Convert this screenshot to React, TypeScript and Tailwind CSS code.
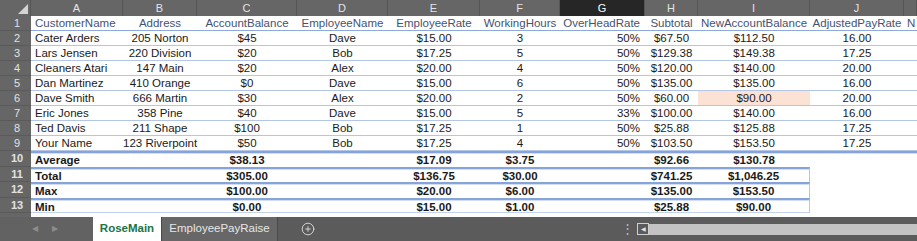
import { CirclePlus } from "lucide-react";

const cols = [
  { key: "A", w: "w-[92px]", align: "text-left pl-[4px]" },
  { key: "B", w: "w-[74px]", align: "text-center" },
  { key: "C", w: "w-[100px]", align: "text-center" },
  { key: "D", w: "w-[91px]", align: "text-center" },
  { key: "E", w: "w-[92px]", align: "text-center" },
  { key: "F", w: "w-[80px]", align: "text-center" },
  { key: "G", w: "w-[85px]", align: "text-right pr-[5px]" },
  { key: "H", w: "w-[53px]", align: "text-center" },
  { key: "I", w: "w-[112px]", align: "text-center" },
  { key: "J", w: "w-[94px]", align: "text-center" },
  { key: "K", w: "flex-1", align: "text-left pl-[3px]" },
];

const headings = [
  "CustomerName", "Address", "AccountBalance", "EmployeeName", "EmployeeRate",
  "WorkingHours", "OverHeadRate", "Subtotal", "NewAccountBalance", "AdjustedPayRate", "N",
];

const rows = [
  ["Cater Arders", "205 Norton", "$45", "Dave", "$15.00", "3", "50%", "$67.50", "$112.50", "16.00"],
  ["Lars Jensen", "220 Division", "$20", "Bob", "$17.25", "5", "50%", "$129.38", "$149.38", "17.25"],
  ["Cleaners Atari", "147 Main", "$20", "Alex", "$20.00", "4", "50%", "$120.00", "$140.00", "20.00"],
  ["Dan Martinez", "410 Orange", "$0", "Dave", "$15.00", "6", "50%", "$135.00", "$135.00", "16.00"],
  ["Dave Smith", "666 Martin", "$30", "Alex", "$20.00", "2", "50%", "$60.00", "$90.00", "20.00"],
  ["Eric Jones", "358 Pine", "$40", "Dave", "$15.00", "5", "33%", "$100.00", "$140.00", "16.00"],
  ["Ted Davis", "211 Shape", "$100", "Bob", "$17.25", "1", "50%", "$25.88", "$125.88", "17.25"],
  ["Your Name", "123 Riverpoint", "$50", "Bob", "$17.25", "4", "50%", "$103.50", "$153.50", "17.25"],
];

const totals = [
  ["Average", "", "$38.13", "", "$17.09", "$3.75", "", "$92.66", "$130.78"],
  ["Total", "", "$305.00", "", "$136.75", "$30.00", "", "$741.25", "$1,046.25"],
  ["Max", "", "$100.00", "", "$20.00", "$6.00", "", "$135.00", "$153.50"],
  ["Min", "", "$0.00", "", "$15.00", "$1.00", "", "$25.88", "$90.00"],
];

const font = "font-['Liberation_Sans',Arial,sans-serif]";

function RowHead({ n, h }: { n: string | number; h: string }) {
  return (
    <div className={`w-[31px] shrink-0 ${h} bg-[#666666] border-b border-[#5a5a5a] text-[#e2e2e2] text-[11px] flex items-center justify-center pl-[3px]`}>
      {n}
    </div>
  );
}

export default function App() {
  return (
    <div className={`w-[917px] h-[241px] bg-white overflow-hidden flex flex-col ${font}`}>
      {/* column letters */}
      <div className="flex h-[16px] bg-[#666666] text-[#e4e4e4] text-[11px]">
        <div className="w-[31px] shrink-0 relative border-r border-[#555]">
          <div className="absolute right-[2px] bottom-[2px] w-0 h-0 border-l-[10px] border-l-transparent border-b-[10px] border-b-[#d4d4d4]" />
        </div>
        {cols.map((c) => (
          <div
            key={c.key}
            className={`${c.w} shrink-0 flex items-center justify-center border-r border-[#555] ${c.key === "G" ? "bg-[#262626] text-white" : ""}`}
          >
            {c.key === "K" ? "" : c.key}
          </div>
        ))}
      </div>

      {/* heading row */}
      <div className="flex h-[15px] text-[11.5px] leading-[14px]">
        <RowHead n={1} h="h-[15px]" />
        {cols.map((c, i) => (
          <div key={c.key} className={`${c.w} shrink-0 ${c.align} text-[#44536f] border-b border-[#8eaadb] whitespace-nowrap overflow-hidden`}>
            {headings[i]}
          </div>
        ))}
      </div>

      {/* data rows */}
      {rows.map((r, ri) => (
        <div key={ri} className="flex h-[15px] text-[11.5px] leading-[14px] text-[#1a1a1a]">
          <RowHead n={ri + 2} h="h-[15px]" />
          {cols.map((c, i) => (
            <div
              key={c.key}
              className={`${c.w} shrink-0 ${c.align} border-b border-[#b4c6e7] whitespace-nowrap ${ri === 4 && i === 8 ? "bg-[#fbe2d5]" : ""}`}
            >
              {r[i] ?? ""}
            </div>
          ))}
        </div>
      ))}

      {/* totals */}
      {totals.map((r, ri) => (
        <div key={ri} className={`flex ${ri % 2 === 0 ? "h-[16px]" : "h-[15px]"} text-[11.5px] leading-[13px] font-bold text-[#1a1a1a]`}>
          <RowHead n={ri + 10} h={ri % 2 === 0 ? "h-[16px]" : "h-[15px]"} />
          {cols.map((c, i) => {
            const inBox = i < 9;
            const top = ri === 0 || inBox ? "border-t-2 border-t-[#86a4da] shadow-[inset_0_1px_0_#d3def3]" : "";
            const bottom = ri === 3 && inBox ? "border-b border-b-[#c3d2ee]" : "";
            const right = ri > 0 && i === 8 ? "border-r border-r-[#b4c6e7]" : "";
            return (
              <div key={c.key} className={`${c.w} shrink-0 ${c.align} whitespace-nowrap pt-[1px] ${top} ${bottom} ${right}`}>
                {r[i] ?? ""}
              </div>
            );
          })}
        </div>
      ))}

      {/* partial row 14 */}
      <div className="flex h-[4px]">
        <div className="w-[31px] shrink-0 bg-[#666666]" />
      </div>

      {/* sheet tabs */}
      <div className="flex flex-1 items-stretch bg-[#5b5b5b] text-[11.5px]">
        <div className="w-[93px] flex items-center gap-[14px] pl-[32px] text-[#8c8c8c] text-[8px] bg-[#626262]">
          <span>◀</span>
          <span>▶</span>
        </div>
        <div className="w-[68px] bg-white text-[#217346] font-bold flex items-center justify-center">
          RoseMain
        </div>
        <div className="w-[116px] bg-[#676767] text-[#e6e6e6] flex items-center justify-center border-l border-[#4a4a4a]">
          EmployeePayRaise
        </div>
        <div className="w-[60px] flex items-center justify-center border-l border-[#4a4a4a] text-[#e0e0e0]">
          <CirclePlus size={14} strokeWidth={1.5} />
        </div>
        <div className="flex-1" />
        <div className="w-[20px] flex items-center justify-center text-[#bdbdbd] text-[13px]">⋮</div>
        <div className="flex-1 max-w-[293px] flex items-center pr-0">
          <div className="w-[12px] h-[12px] border border-[#cfcfcf] flex items-center justify-center text-[#e6e6e6] text-[6px]">◀</div>
          <div className="flex-1 h-[11px] bg-[#c3c3c3]" />
        </div>
      </div>
    </div>
  );
}
